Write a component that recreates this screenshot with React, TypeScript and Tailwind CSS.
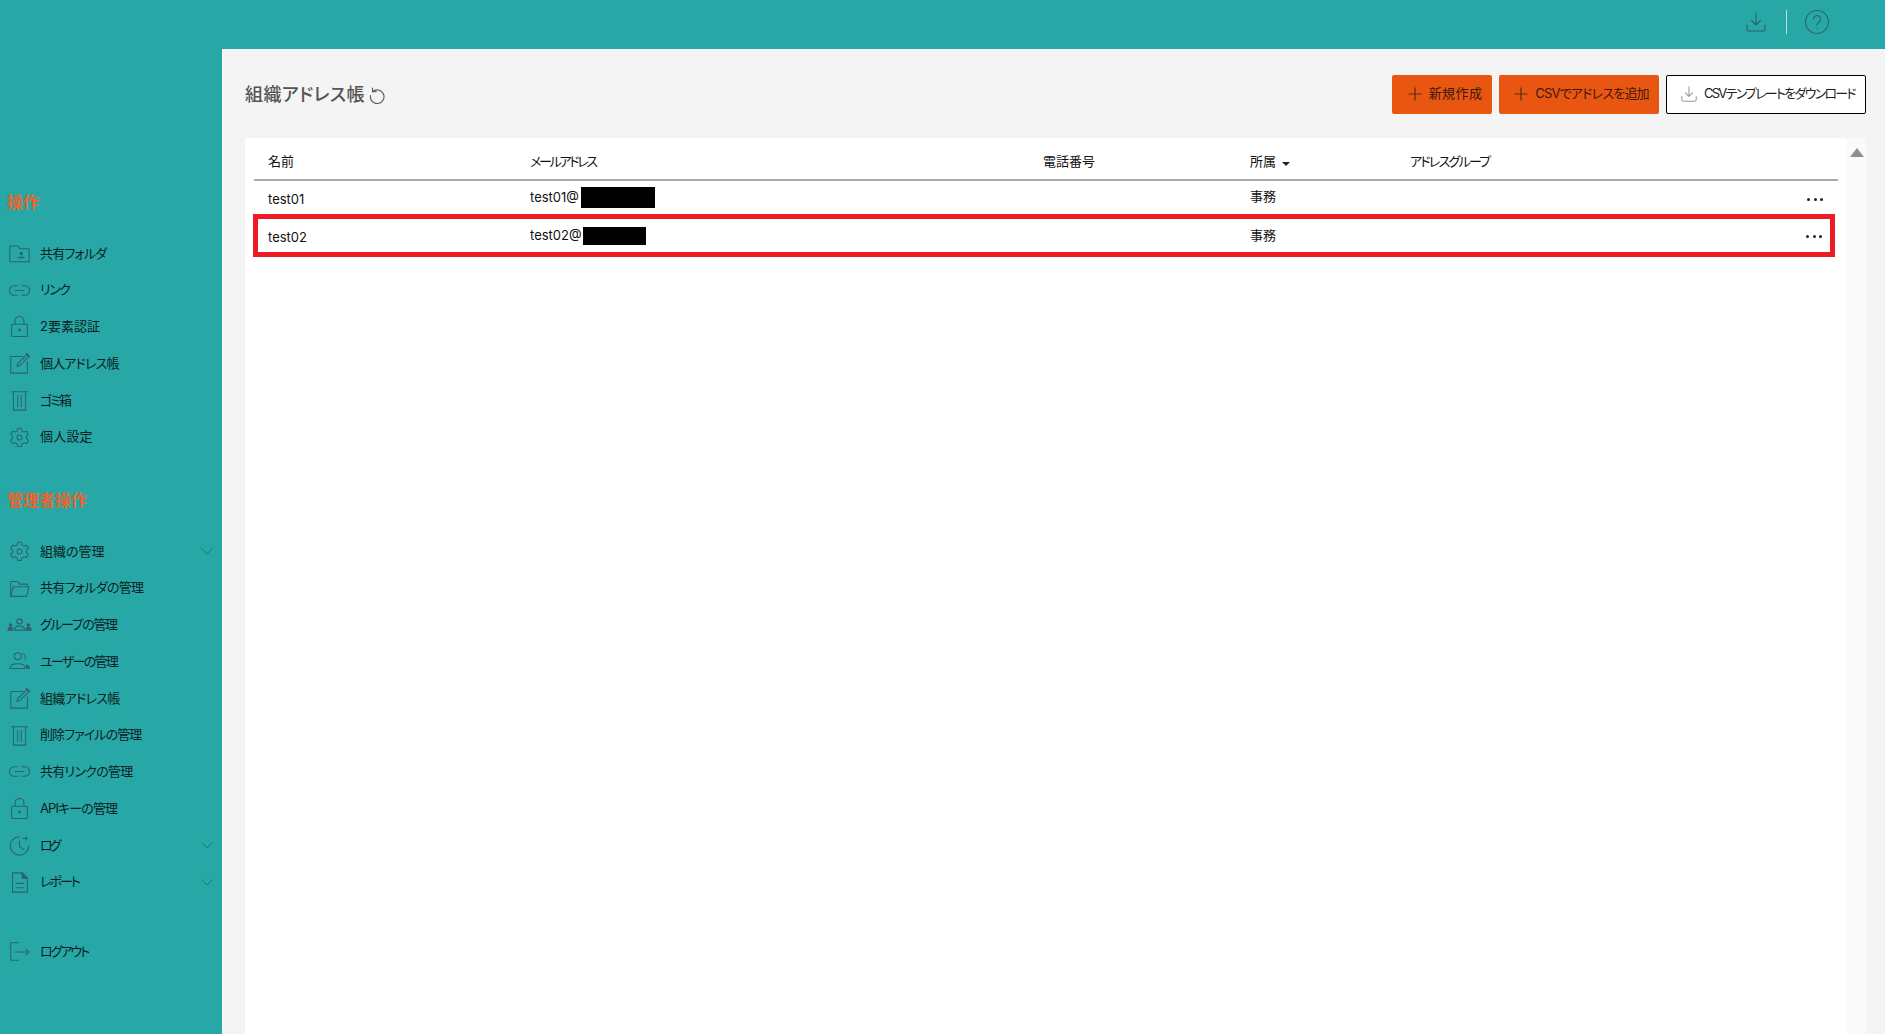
import type { ReactNode } from "react";

function Ico({ children, w = 21, h = 21, vb = "0 0 24 24" }: { children: ReactNode; w?: number; h?: number; vb?: string }) {
  return (
    <svg width={w} height={h} viewBox={vb} fill="none" stroke="#2f636b" strokeWidth="1.200" strokeLinecap="round" strokeLinejoin="round">
      {children}
    </svg>
  );
}

const FolderUser = () => (
  <Ico>
    <path d="M1 3.500h9l2.500 3H23v15H1z" />
    <circle cx="14" cy="12" r="1.300" fill="#2f636b" />
    <path d="M11 16.500h6" strokeWidth="1.600" />
  </Ico>
);
const LinkIcon = () => (
  <Ico>
    <path d="M9.500 6.500H6a5.500 5.500 0 0 0 0 11h3.500M14.500 6.500H18a5.500 5.500 0 0 1 0 11h-3.500M7 12h10" />
  </Ico>
);
const Lock = () => (
  <Ico>
    <rect x="3" y="9.500" width="18" height="14" rx="1" />
    <path d="M7 9.500V5.500a5 5 0 0 1 10 0v4" />
    <circle cx="12" cy="16" r="1" fill="#2f636b" />
  </Ico>
);
const Note = () => (
  <Ico>
    <path d="M16 4H2v19h19V10" />
    <path d="M9 15.500l1-3.500L21 1.500l2 2L13 14z" />
    <path d="M20 1l3 3" strokeWidth="2" />
  </Ico>
);
const Trash = () => (
  <Ico>
    <path d="M3 2h18M5 2v21h14V2M10 6v13M14 6v13" />
  </Ico>
);
const Gear = () => (
  <Ico>
    <path d="M10 1.500h4l.7 3 2.400 1.300 3-.9 2 3.500-2.200 2.100v2.800l2.200 2.100-2 3.500-3-.9-2.400 1.300-.7 3h-4l-.7-3-2.400-1.300-3 .9-2-3.500 2.200-2.100v-2.800L1.900 8.400l2-3.500 3 .9 2.400-1.300z" />
    <circle cx="12" cy="12" r="2.800" />
  </Ico>
);
const FolderOpen = () => (
  <Ico w={23} h={21}>
    <path d="M2 21V4h8l2 3h9v3" />
    <path d="M2 21l3-11h18l-3 11z" />
  </Ico>
);
const Group = () => (
  <Ico w={25} h={13} vb="0 0 24 12">
    <circle cx="12" cy="3" r="2.500" />
    <path d="M7 11.500c0-3 2-4 5-4s5 1 5 4z" />
    <circle cx="3.500" cy="6.500" r="1.100" fill="#2f636b" />
    <path d="M1 11.500c0-2 1-3 2.500-3S5.500 9.500 5.500 11.500z" fill="#2f636b" />
    <circle cx="20.500" cy="6.500" r="1.100" fill="#2f636b" />
    <path d="M18.500 11.500c0-2 1-3 2-3s2.500 1 2.500 3z" fill="#2f636b" />
  </Ico>
);
const User = () => (
  <Ico>
    <circle cx="10" cy="6" r="4" />
    <path d="M1 20c0-4 4-5.500 9-5.500s8 1.500 8 3.500v2z" />
    <path d="M16 3a4 4 0 0 1 2 6" />
    <path d="M20 16l3 2v2h-3z" fill="#2f636b" />
  </Ico>
);
const Clock = () => (
  <Ico>
    <path d="M12 2a10.500 10.500 0 1 0 10.500 10.500" />
    <path d="M12 7v6l5 4M16 4h5M19 2l2 2-2 2" />
  </Ico>
);
const Doc = () => (
  <Ico>
    <path d="M4 1h11l6 6v16H4z" />
    <path d="M15 1l6 6h-6z" fill="#2f636b" />
    <path d="M8 13h9M8 18h9" />
  </Ico>
);
const Logout = () => (
  <Ico>
    <path d="M11 2H2v20h9M7 12.500h16M19 9l4 3.500-4 3.500" />
  </Ico>
);

const Chevron = () => (
  <svg width="12" height="7" viewBox="0 0 12 7" fill="none" stroke="#2f6f76" strokeWidth="1">
    <path d="M.5 .5L6 6l5.500-5.500" />
  </svg>
);

function NavItem({ icon, label, more, track = "" }: { icon: ReactNode; label: string; more?: boolean; track?: string }) {
  return (
    <div className="flex h-[36.750px] items-center text-[13px] text-[#0b1f24]">
      <div className="flex w-[40px] shrink-0 items-center justify-center pr-[2px]">{icon}</div>
      <span className={`flex-1 ${track}`}>{label}</span>
      {more && (
        <span className="mr-[9px] flex">
          <Chevron />
        </span>
      )}
    </div>
  );
}

function Heading({ children, className }: { children: ReactNode; className: string }) {
  return (
    <div className={`flex h-[24px] items-center pl-[7px] text-[16px] font-semibold text-[#f0622a] ${className}`}>{children}</div>
  );
}

const mainNav = [
  { icon: <FolderUser />, label: "共有フォルダ", track: "tracking-[-0.8px]" },
  { icon: <LinkIcon />, label: "リンク", track: "tracking-[-1.5px]" },
  { icon: <Lock />, label: "2要素認証" },
  { icon: <Note />, label: "個人アドレス帳", track: "tracking-[-0.85px]" },
  { icon: <Trash />, label: "ゴミ箱", track: "tracking-[-2px]" },
  { icon: <Gear />, label: "個人設定", track: "tracking-[0.2px]" },
];

const adminNav = [
  { icon: <Gear />, label: "組織の管理", more: true },
  { icon: <FolderOpen />, label: "共有フォルダの管理", track: "tracking-[-0.7px]" },
  { icon: <Group />, label: "グループの管理", track: "tracking-[-1.4px]" },
  { icon: <User />, label: "ユーザーの管理", track: "tracking-[-1.7px]" },
  { icon: <Note />, label: "組織アドレス帳", track: "tracking-[-0.7px]" },
  { icon: <Trash />, label: "削除ファイルの管理", track: "tracking-[-0.9px]" },
  { icon: <LinkIcon />, label: "共有リンクの管理", track: "tracking-[-0.75px]" },
  { icon: <Lock />, label: "APIキーの管理", track: "tracking-[-0.9px]" },
  { icon: <Clock />, label: "ログ", more: true, track: "tracking-[-3px]" },
  { icon: <Doc />, label: "レポート", more: true, track: "tracking-[-2px]" },
];

const Dots = () => (
  <div className="flex justify-end gap-[3.500px]">
    <span className="h-[3px] w-[3px] rounded-full bg-[#222]" />
    <span className="h-[3px] w-[3px] rounded-full bg-[#222]" />
    <span className="h-[3px] w-[3px] rounded-full bg-[#222]" />
  </div>
);

const Plus = () => (
  <svg width="14" height="14" viewBox="0 0 14 14" stroke="#5a2a10" strokeWidth="1.200">
    <path d="M7 .5v13M.5 7h13" />
  </svg>
);

export default function App() {
  return (
    <div className="flex h-[1034px] flex-col overflow-hidden bg-[#27a8a6] font-['Inter','Noto_Sans_CJK_JP',sans-serif] [font-feature-settings:'palt'] text-[13px] text-[#111]">
      <header className="flex h-[49px] shrink-0 items-center justify-end pb-[5px] pr-[56px]">
        <svg width="20" height="20" viewBox="0 0 20 20" fill="none" stroke="#2f636b" strokeWidth="1.100" strokeLinecap="round" strokeLinejoin="round">
          <path d="M10 1v12M5.500 8.500L10 13l4.500-4.500M1 13v4a2 2 0 0 0 2 2h14a2 2 0 0 0 2-2v-4" />
        </svg>
        <div className="ml-[20px] mr-[18px] h-[24px] w-px bg-[#b8dedd]" />
        <svg width="24" height="24" viewBox="0 0 24 24" fill="none" stroke="#2f636b" strokeWidth="1.100" strokeLinecap="round" strokeLinejoin="round">
          <circle cx="12" cy="12" r="11.500" />
          <path d="M8.500 9a3.500 3.500 0 1 1 5.500 3c-1.300 1-2 1.600-2 3M12 18.500v.2" />
        </svg>
      </header>
      <div className="flex min-h-0 flex-1">
        <aside className="w-[222px] shrink-0 pt-[141px]">
          <Heading className="mb-[21px]">操作</Heading>
          {mainNav.map((n) => (
            <NavItem key={n.label} icon={n.icon} label={n.label} track={n.track} />
          ))}
          <Heading className="mb-[20.600px] mt-[32.800px]">管理者操作</Heading>
          {adminNav.map((n) => (
            <NavItem key={n.label} icon={n.icon} label={n.label} more={n.more} track={n.track} />
          ))}
          <div className="mt-[32.500px]">
            <NavItem icon={<Logout />} label="ログアウト" track="tracking-[-2px]" />
          </div>
        </aside>
        <main className="min-w-0 flex-1 bg-[#f4f4f4] pl-[23px] pr-[19px]">
          <div className="flex h-[89px] items-center pt-[1px]">
            <h1 className="text-[18px] font-medium tracking-[0.4px] text-[#555]">組織アドレス帳</h1>
            <svg className="ml-[3px] mt-[2px]" width="17" height="17" viewBox="0 0 17 17" fill="none" stroke="#555" strokeWidth="1.100" strokeLinecap="round" strokeLinejoin="round">
              <path d="M4.500 4.800a6.800 6.800 0 1 1-2 3.700M4.500 1v3.800h3.800" />
            </svg>
            <div className="ml-auto flex gap-[7px]">
              <button className="flex h-[39px] w-[100px] items-center justify-center gap-[7px] rounded-[2px] bg-[#e95612] pl-[6px] text-[13px] tracking-[0.4px] text-[#3a1a08]">
                <Plus />
                新規作成
              </button>
              <button className="flex h-[39px] w-[160px] items-center justify-center gap-[7px] whitespace-nowrap rounded-[2px] bg-[#e95612] pl-[5px] text-[13px] tracking-[-0.8px] text-[#3a1a08]">
                <Plus />
                CSVでアドレスを追加
              </button>
              <button className="flex h-[39px] w-[200px] items-center justify-center gap-[7px] whitespace-nowrap rounded-[2px] border border-black bg-white pl-[4px] text-[13px] tracking-[-1.750px] text-[#222]">
                <svg width="16" height="16" viewBox="0 0 20 20" fill="none" stroke="#999" strokeWidth="1.300" strokeLinecap="round" strokeLinejoin="round">
                  <path d="M10 1v12M5.500 8.500L10 13l4.500-4.500M1 13v4a2 2 0 0 0 2 2h14a2 2 0 0 0 2-2v-4" />
                </svg>
                CSVテンプレートをダウンロード
              </button>
            </div>
          </div>
          <div className="flex h-[896px]">
            <div className="min-w-0 flex-1 rounded-t-[3px] bg-white px-[9px]">
              <div className="grid h-[43px] grid-cols-[262px_513px_207px_160px_1fr] items-center border-b-2 border-[#aaa] pl-[14px] pt-[7px] text-[13px]">
                <span>名前</span>
                <span className="tracking-[-2.300px]">メールアドレス</span>
                <span>電話番号</span>
                <span className="flex items-center gap-[6px]">
                  所属
                  <span className="mt-[3px] border-x-[4px] border-t-[4px] border-x-transparent border-t-[#222]" />
                </span>
                <span className="tracking-[-1.750px]">アドレスグループ</span>
              </div>
              <div className="grid h-[33px] grid-cols-[262px_513px_207px_160px_1fr_36px] items-center pl-[14px] pr-[15px]">
                <span className="pt-[5px]">test01</span>
                <span className="flex items-center">
                  test01@
                  <span className="ml-[2px] h-[21px] w-[74px] bg-black" />
                </span>
                <span />
                <span className="pb-[2px]">事務</span>
                <span />
                <span className="pt-[4px]">
                  <Dots />
                </span>
              </div>
              <div className="-ml-px mr-[3px] grid h-[43px] grid-cols-[262px_513px_207px_160px_1fr_36px] items-center border-[5px] border-[#ed1c24] pl-[10px] pr-[8px]">
                <span className="pt-[4px]">test02</span>
                <span className="flex items-center pt-[1px]">
                  test02@
                  <span className="ml-px h-[18px] w-[63px] bg-black" />
                </span>
                <span />
                <span>事務</span>
                <span />
                <span className="pt-[1px]">
                  <Dots />
                </span>
              </div>
            </div>
            <div className="w-[19px] shrink-0 bg-[#fafafa] pt-[10px]">
              <div className="mx-auto h-0 w-0 border-x-[7px] border-b-[9px] border-x-transparent border-b-[#8f8f8f]" />
            </div>
          </div>
        </main>
      </div>
    </div>
  );
}
